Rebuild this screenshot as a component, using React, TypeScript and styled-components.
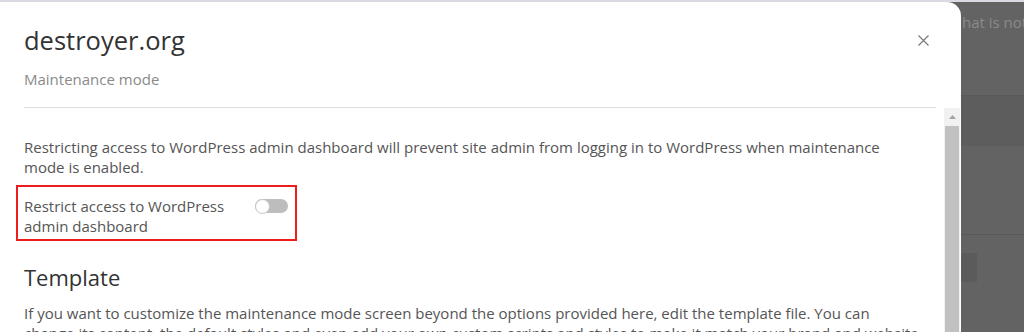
import React from "react";
import styled, { createGlobalStyle } from "styled-components";

const GlobalStyle = createGlobalStyle`
  html, body {
    margin: 0;
    padding: 0;
    background: #636363;
  }
  body {
    font-family: "Open Sans", "Liberation Sans", sans-serif;
  }
`;

const App = () => {
    return (
        <Page>
            <GlobalStyle />
            <TopStrip />
            <Stage>
                <Modal>
                    <Header>
                        <HeaderInner>
                            <TitleRow>
                                <Title>destroyer.org</Title>
                                <CloseButton aria-label="Close">
                                    <svg width="11" height="11" viewBox="0 0 11 11">
                                        <path d="M0.5 0.5 L10.5 10.5 M10.5 0.5 L0.5 10.5" stroke="#7a7a7a" strokeWidth="1.2" fill="none"/>
                                    </svg>
                                </CloseButton>
                            </TitleRow>
                            <Subtitle>Maintenance mode</Subtitle>
                        </HeaderInner>
                    </Header>

                    <Body>
                        <Content>
                            <Paragraph>
                                Restricting access to WordPress admin dashboard will prevent site admin from logging in to WordPress when maintenance mode is enabled.
                            </Paragraph>

                            <Highlight>
                                <OptionLabel>Restrict access to WordPress admin dashboard</OptionLabel>
                                <Toggle>
                                    <Track>
                                        <Knob />
                                    </Track>
                                </Toggle>
                            </Highlight>

                            <Heading>Template</Heading>
                            <Paragraph $gap={11}>
                                If you want to customize the maintenance mode screen beyond the options provided here, edit the template file. You can
                                change its content, the default styles and even add your own custom scripts and styles to make it match your brand and website design.
                            </Paragraph>
                        </Content>

                        <Rail>
                            <RailArrow>
                                <svg width="7" height="4" viewBox="0 0 7 4">
                                    <path d="M0 4 L3.5 0 L7 4 Z" fill="#a3a3a3"/>
                                </svg>
                            </RailArrow>
                            <Thumb />
                        </Rail>
                    </Body>
                </Modal>

                <Backdrop>
                    <FadedRow>hat is not</FadedRow>
                    <FadedBand />
                    <FadedSection />
                    <FadedBox />
                </Backdrop>
            </Stage>
        </Page>
    );
};

/* CSS */
const Page = styled.div`
  width: 1024px;
  height: 332px;
  display: flex;
  flex-direction: column;
  overflow: hidden;
`;

const TopStrip = styled.div`
  height: 2px;
  background: #dadae2;
  flex-shrink: 0;
`;

const Stage = styled.div`
  flex: 1;
  display: flex;
  min-height: 0;
`;

const Modal = styled.div`
  width: 961px;
  flex-shrink: 0;
  background: #fff;
  border-top-right-radius: 14px;
  overflow: hidden;
  display: flex;
  flex-direction: column;
`;

const Header = styled.div`
  padding: 21px 25px 0 24px;
`;

const HeaderInner = styled.div`
  padding-bottom: 18px;
  border-bottom: 1px solid #dedee6;
`;

const TitleRow = styled.div`
  display: flex;
  justify-content: space-between;
  align-items: center;
`;

const Title = styled.h1`
  margin: 0;
  font-size: 25.5px;
  line-height: 34px;
  font-weight: 400;
  color: #333;
`;

const CloseButton = styled.button`
  width: 26px;
  height: 26px;
  padding: 0;
  border: none;
  background: none;
  display: flex;
  align-items: center;
  justify-content: center;
  cursor: pointer;
`;

const Subtitle = styled.div`
  margin-top: 12px;
  font-size: 15px;
  line-height: 20px;
  color: #8a8a8a;
`;

const Body = styled.div`
  flex: 1;
  min-height: 0;
  display: flex;
`;

const Content = styled.div`
  flex: 1;
  padding: 29px 24px 0 24px;
  overflow: hidden;
`;

const Paragraph = styled.p<{ $gap?: number }>`
  margin: ${p => p.$gap ?? 0}px 0 0;
  font-size: 15px;
  line-height: 20px;
  color: #555;
`;

const Highlight = styled.div`
  margin: 8px 0 0 -8px;
  width: 281px;
  box-sizing: border-box;
  border: 2px solid #ee1c1c;
  padding: 9px 7px 3px 6px;
  display: flex;
  align-items: flex-start;
`;

const OptionLabel = styled.div`
  width: 222px;
  font-size: 15px;
  line-height: 20px;
  color: #555;
`;

const Toggle = styled.div`
  margin-left: 9px;
  height: 20px;
  display: flex;
  align-items: center;
`;

const Track = styled.div`
  width: 33px;
  height: 14px;
  border-radius: 7px;
  background: #bdbdbd;
  display: flex;
  align-items: center;
`;

const Knob = styled.div`
  width: 15px;
  height: 15px;
  box-sizing: border-box;
  flex-shrink: 0;
  border-radius: 50%;
  background: #fff;
  border: 1px solid #c6c6c6;
`;

const Heading = styled.h2`
  margin: 21px 0 0;
  font-size: 22px;
  line-height: 30px;
  font-weight: 500;
  color: #333;
`;

const Rail = styled.div`
  width: 16px;
  margin-right: 1px;
  background: #f1f1f1;
  display: flex;
  flex-direction: column;
`;

const RailArrow = styled.div`
  height: 17px;
  display: flex;
  align-items: center;
  justify-content: center;
`;

const Thumb = styled.div`
  flex: 1;
  margin: 1px 1px 0;
  background: #c1c1c1;
`;

const Backdrop = styled.div`
  flex: 1;
  display: flex;
  flex-direction: column;
  overflow: hidden;
`;

const FadedRow = styled.div`
  height: 93px;
  box-sizing: border-box;
  padding: 10px 0 0 1px;
  font-size: 15px;
  line-height: 20px;
  color: #8a8a8a;
  white-space: nowrap;
`;

const FadedBand = styled.div`
  height: 50px;
  border-top: 1px solid #595959;
  background: #5d5d5d;
`;

const FadedSection = styled.div`
  height: 88px;
  border-bottom: 1px solid #595959;
`;

const FadedBox = styled.div`
  margin-top: 18px;
  width: 16px;
  height: 29px;
  background: #5b5b5b;
`;

export default App;
